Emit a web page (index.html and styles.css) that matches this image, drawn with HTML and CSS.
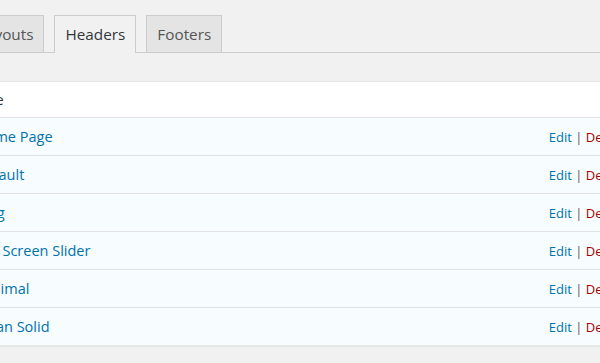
FILE: index.html
```html
<!DOCTYPE html>
<html lang="en">
<head>
    <meta charset="UTF-8">
    <title>Headers</title>
    <link rel="stylesheet" href="styles.css">
</head>
<body>
    <div class="wrap">
        <div class="nav-tabs">
            <a class="nav-tab" href="#">Layouts</a>
            <a class="nav-tab active" href="#">Headers</a>
            <a class="nav-tab" href="#">Footers</a>
        </div>

        <div class="list">
            <div class="list-head">Title</div>
            <div class="row">
                <a class="row-title" href="#">Home Page</a>
                <span class="row-actions"><a class="edit" href="#">Edit</a> | <a class="delete" href="#">Delete</a></span>
            </div>
            <div class="row">
                <a class="row-title" href="#">Default</a>
                <span class="row-actions"><a class="edit" href="#">Edit</a> | <a class="delete" href="#">Delete</a></span>
            </div>
            <div class="row">
                <a class="row-title" href="#">Blog</a>
                <span class="row-actions"><a class="edit" href="#">Edit</a> | <a class="delete" href="#">Delete</a></span>
            </div>
            <div class="row">
                <a class="row-title" href="#">Full Screen Slider</a>
                <span class="row-actions"><a class="edit" href="#">Edit</a> | <a class="delete" href="#">Delete</a></span>
            </div>
            <div class="row">
                <a class="row-title" href="#">Minimal</a>
                <span class="row-actions"><a class="edit" href="#">Edit</a> | <a class="delete" href="#">Delete</a></span>
            </div>
            <div class="row">
                <a class="row-title" href="#">Clean Solid</a>
                <span class="row-actions"><a class="edit" href="#">Edit</a> | <a class="delete" href="#">Delete</a></span>
            </div>
        </div>
    </div>
</body>
</html>
```

FILE: styles.css
```css
body, html {
    margin: 0;
    height: 100%;
    background: #f1f1f1;
    font-family: "Open Sans", Arial, sans-serif;
    color: #444;
    overflow: hidden;
}
a {
    text-decoration: none;
}
.wrap {
    margin-left: -36px;
    width: 672px;
    padding-top: 15px;
}
.nav-tabs {
    display: flex;
    padding-left: 3px;
    border-bottom: 1px solid #ccc;
    height: 37px;
}
.nav-tab {
    display: block;
    margin-right: 10px;
    padding: 0 10px;
    border: 1px solid #ccc;
    border-bottom: none;
    background: #e4e4e4;
    color: #555;
    font-size: 15.3px;
    line-height: 36px;
    height: 36px;
}
.nav-tab.active {
    background: #f1f1f1;
    color: #32373c;
    height: 37px;
}
.list {
    margin-top: 28px;
    border: 1px solid #e5e5e5;
    box-shadow: 0 1px 1px rgba(0, 0, 0, 0.04);
    background: #f7fcfe;
}
.list-head {
    height: 35px;
    line-height: 35px;
    padding: 0 10px;
    background: #fff;
    color: #32373c;
    font-size: 14.5px;
    border-bottom: 1px solid #e1e1e1;
}
.row {
    display: flex;
    align-items: center;
    justify-content: space-between;
    height: 37px;
    padding: 0 10px;
    border-bottom: 1px solid #e1e1e1;
}
.row:last-child {
    border-bottom: none;
}
.row-title {
    color: #0073aa;
    font-size: 14.5px;
}
.row-actions {
    font-size: 13px;
    color: #555;
}
.row-actions .edit {
    color: #0073aa;
}
.row-actions .delete {
    color: #a00;
}
```
